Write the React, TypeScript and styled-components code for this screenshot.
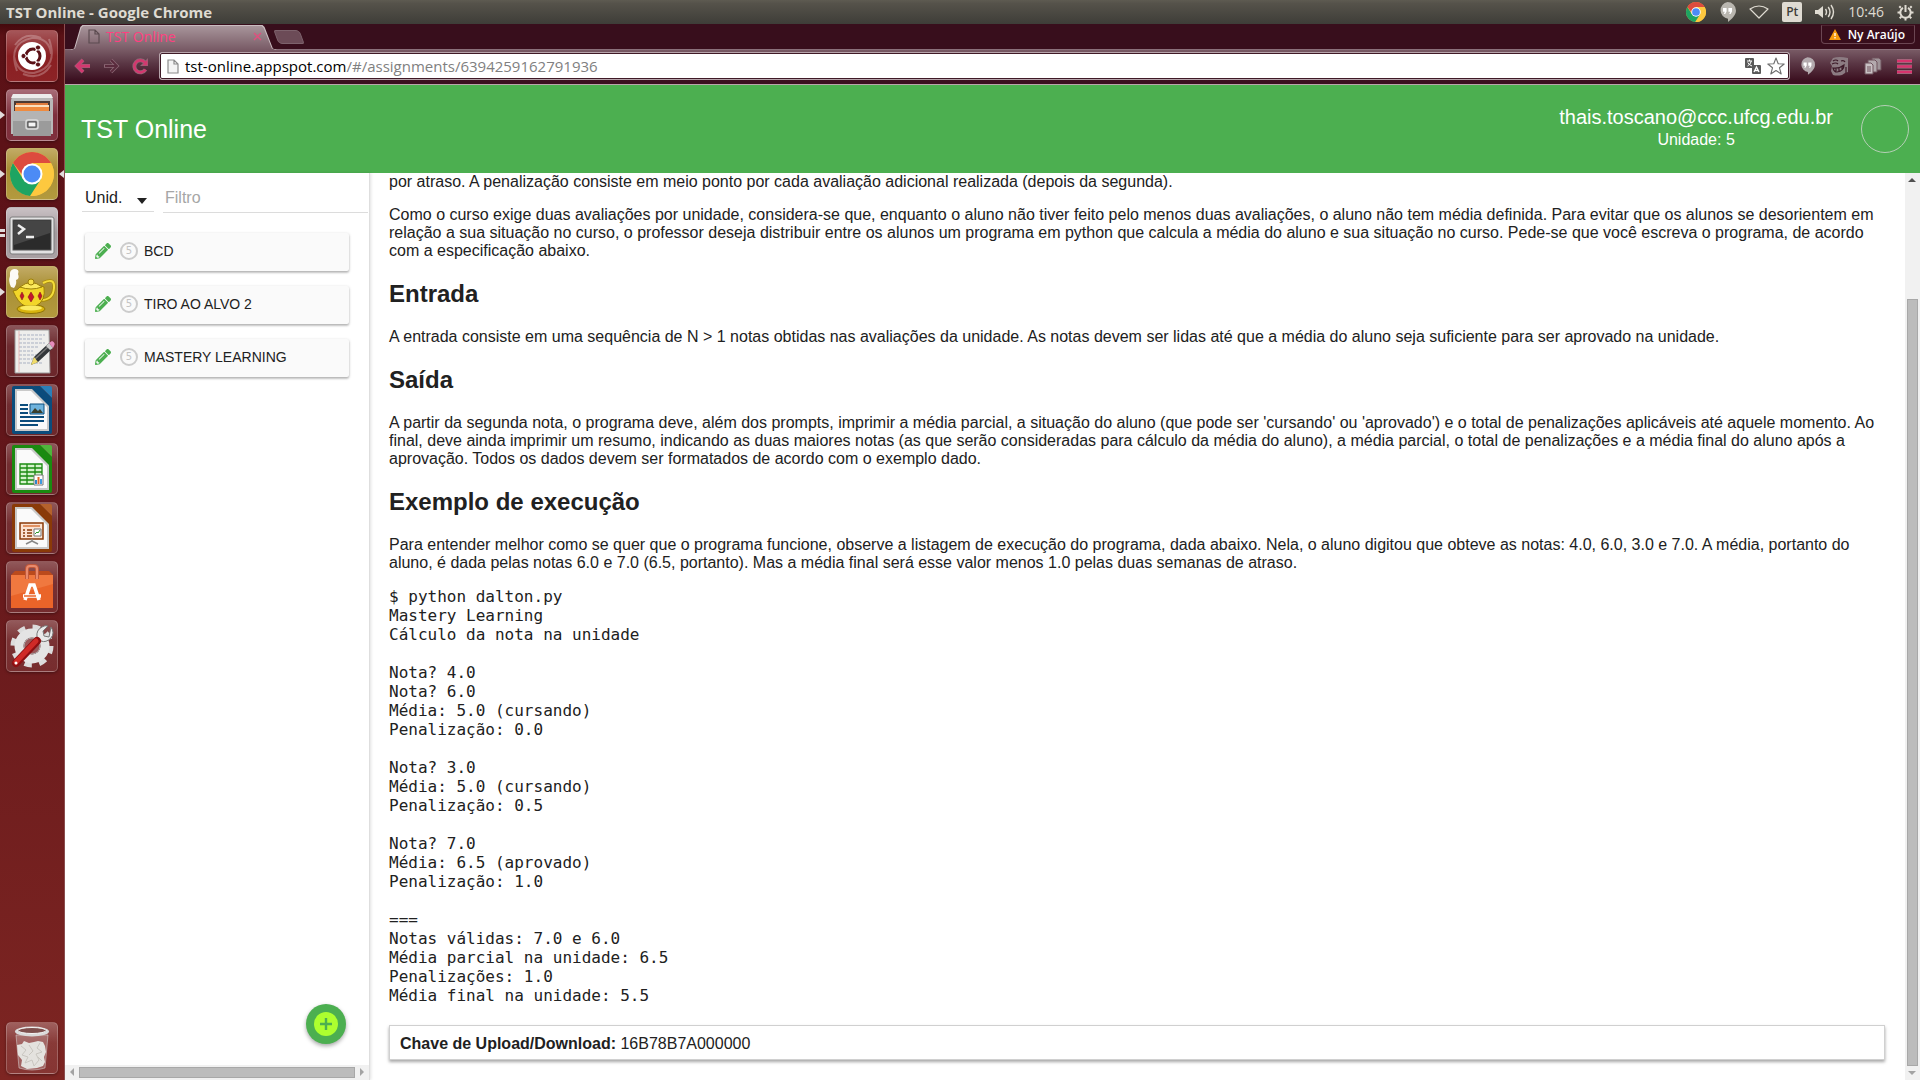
import React from "react";
import styled, { createGlobalStyle } from "styled-components";
import { FaPencilAlt } from "react-icons/fa";

const uiFont = `"Open Sans", "Noto Sans", sans-serif`;
const pageFont = `"Liberation Sans", Arial, sans-serif`;
const green = "#4caf50";

const GlobalStyle = createGlobalStyle`
  * { box-sizing: border-box; }
  body { margin: 0; background: #fff; overflow: hidden; }
  button, input, select { font: inherit; color: inherit; margin: 0; }
  svg { display: block; flex: none; }
`;

const Desktop = styled.div`
  display: grid;
  grid-template: 24px minmax(0, 1fr) / 65px minmax(0, 1fr);
  height: 100vh;
  font-family: ${uiFont};
`;

/* ---------- top panel ---------- */

const Panel = styled.header`
  grid-column: 1 / -1;
  display: flex;
  align-items: center;
  justify-content: space-between;
  padding: 0 6px;
  color: #dfdbd2;
  background: linear-gradient(#5e5b51, #55524a 15%, #3e3d38);
`;

const WindowTitle = styled.h1`
  margin: 0;
  font-size: 15px;
  line-height: 24px;
  font-weight: 700;
`;

const Indicators = styled.div`
  display: flex;
  align-items: center;
  gap: 13px;
`;

const Keyboard = styled.span`
  width: 20px;
  height: 20px;
  border-radius: 2px;
  background: #dfdbd2;
  color: #3e3d38;
  font-size: 12px;
  font-weight: 600;
  line-height: 20px;
  text-align: center;
`;

const Clock = styled.time`
  font-size: 14px;
  line-height: 24px;
`;

/* ---------- launcher ---------- */

const Launcher = styled.nav`
  display: flex;
  flex-direction: column;
  gap: 7px;
  padding: 6px;
  border-right: 1px solid #8d4f50;
  background: linear-gradient(#44090d, #5b1116 12px, #5e1419 30%, #7d2522);
`;

const Tile = styled.button<{ $tint: string }>`
  position: relative;
  display: grid;
  place-items: center;
  width: 52px;
  height: 52px;
  padding: 0;
  border: 1px solid rgba(255, 255, 255, 0.22);
  border-radius: 5px;
  background: ${(p) => p.$tint};
  box-shadow: 0 1px 3px rgba(0, 0, 0, 0.35);
  &:last-child { margin-top: auto; }
`;

const Marker = styled.i<{ $side: "left" | "right" }>`
  position: absolute;
  top: 21px;
  ${(p) => p.$side}: -7px;
  border: 4px solid transparent;
  border-${(p) => p.$side}: 5px solid #e2dcdc;
  border-${(p) => (p.$side === "left" ? "right" : "left")}-width: 0;
`;

const Pair = styled.i`
  position: absolute;
  top: 21px;
  left: -7px;
  width: 5px;
  height: 8px;
  border: solid #e2dcdc;
  border-width: 3px 0;
`;

/* ---------- browser ---------- */

const Browser = styled.div`
  display: flex;
  flex-direction: column;
  min-width: 0;
  min-height: 0;
`;

const TabStrip = styled.div`
  display: flex;
  justify-content: space-between;
  height: 25px;
  padding: 1px 5px 0;
  background: #380e1c;
`;

const Tabs = styled.div`
  display: flex;
`;

/* One pixel taller than the strip, so that it covers the toolbar's top line. */
const TabEdge = styled.div`
  position: relative;
  width: 207px;
  height: 25px;
  padding: 1px 1px 0;
  background: #c9bcc0;
  clip-path: polygon(0 100%, 2% 94%, 5% 8%, 6% 0, 93% 0, 94% 8%, 98% 94%, 100% 100%);
`;

const Tab = styled.div`
  display: flex;
  align-items: center;
  gap: 6px;
  height: 24px;
  padding: 0 14px 3px 17px;
  color: #ff4080;
  font-size: 14px;
  line-height: 20px;
  background: linear-gradient(#a8959b, #785a65);
  clip-path: polygon(0 100%, 2% 94%, 5% 8%, 6% 0, 93% 0, 94% 8%, 98% 94%, 100% 100%);
`;

const TabName = styled.span`
  flex: 1;
`;

const BareButton = styled.button`
  display: grid;
  place-items: center;
  padding: 0;
  border: 0;
  background: none;
`;

const NewTab = styled.button`
  align-self: center;
  width: 26px;
  height: 14px;
  margin-left: -1px;
  padding: 0;
  border: 1px solid #7d626c;
  border-radius: 2px 4px 2px 4px;
  background: #6c4b57;
  transform: skewX(20deg);
`;

const Profile = styled.button`
  display: flex;
  align-items: center;
  gap: 7px;
  height: 19px;
  padding: 0 9px 0 7px;
  border: 1px solid #6b4652;
  border-top-color: #4d2431;
  border-radius: 0 0 4px 4px;
  background: none;
  color: #fff;
  font-size: 12px;
  font-weight: 600;
  line-height: 16px;
`;

const Toolbar = styled.div`
  display: flex;
  align-items: center;
  height: 36px;
  padding: 0 8px 2px 9px;
  gap: 10px;
  border-top: 1px solid #8a707a;
  border-bottom: 1px solid #b9a5ab;
  background: linear-gradient(#785a65, #5a3644 40%, #3b0f1f 90%);
`;

const NavButtons = styled.div`
  display: flex;
  align-items: center;
  gap: 12px;
`;

const Omnibox = styled.form`
  display: flex;
  flex: 1;
  align-items: center;
  gap: 6px;
  height: 28px;
  padding: 0 4px 0 7px;
  border: 1px solid #b7a4ab;
  outline: 1px solid #3f1a27;
  outline-offset: -2px;
  border-radius: 3px;
  background: #fff;
`;

const Address = styled.label`
  flex: 1;
  color: #808080;
  font-size: 15px;
  line-height: 22px;
  b { color: #000; font-weight: 400; }
`;

const Extensions = styled.div`
  display: flex;
  align-items: center;
  gap: 15px;
`;

/* ---------- application ---------- */

const AppBar = styled.header`
  display: flex;
  flex: none;
  align-items: center;
  height: 88px;
  padding: 0 11px 0 16px;
  background: ${green};
  color: #fff;
  font-family: ${pageFont};
`;

const Brand = styled.h2`
  flex: 1;
  margin: 0;
  font-size: 25px;
  font-weight: 400;
  line-height: 28px;
`;

const Account = styled.div`
  display: flex;
  flex-direction: column;
  align-items: center;
  margin-right: 28px;
  padding-bottom: 4px;
  font-size: 16px;
  line-height: 20px;
`;

const Email = styled.span`
  font-size: 20px;
  line-height: 26px;
`;

const Avatar = styled.button`
  width: 48px;
  height: 48px;
  border: 1px solid #b5cfb6;
  border-radius: 50%;
  background: none;
`;

const Body = styled.div`
  display: grid;
  flex: 1;
  grid-template-columns: 305px minmax(0, 1fr) 15px;
  min-height: 0;
  color: #212121;
  font: 16px/18px ${pageFont};
`;

const Sidebar = styled.aside`
  display: flex;
  flex-direction: column;
  min-height: 0;
  border-right: 1px solid #dedede;
  box-shadow: 1px 0 3px rgba(0, 0, 0, 0.12);
`;

const Filters = styled.div`
  display: flex;
  align-items: flex-start;
  gap: 9px;
  padding: 10px 1px 0 17px;
`;

const UnitBox = styled.div`
  display: flex;
  align-items: center;
  width: 72px;
  height: 29px;
  padding: 1px 7px 0 3px;
  border-bottom: 1px solid #dcdcdc;
`;

const UnitSelect = styled.select`
  flex: 1;
  min-width: 0;
  padding: 0;
  border: 0;
  appearance: none;
  background: none;
`;

const Caret = styled.i`
  margin-top: 6px;
  border: 5px solid transparent;
  border-top: 6px solid #212121;
  border-bottom: 0;
`;

const FilterInput = styled.input`
  flex: 1;
  min-width: 0;
  height: 30px;
  padding: 0 2px;
  border: 0;
  border-bottom: 1px solid #dcdcdc;
  background: none;
  &::placeholder { color: #a6a6a6; opacity: 1; }
`;

const Assignments = styled.ul`
  display: flex;
  flex: 1;
  flex-direction: column;
  gap: 15px;
  margin: 0;
  padding: 20px 20px 0;
  list-style: none;
`;

const Card = styled.button`
  display: flex;
  align-items: center;
  gap: 5px;
  width: 100%;
  height: 38px;
  padding: 0 10px 2px;
  border: 0;
  border-radius: 2px;
  background: #fafafa;
  box-shadow: 0 1px 3px rgba(0, 0, 0, 0.25), 0 2px 2px rgba(0, 0, 0, 0.13);
  font-size: 14px;
  line-height: 18px;
  text-align: left;
`;

const Level = styled.span`
  display: grid;
  place-items: center;
  width: 18px;
  height: 18px;
  margin: 0 1px 0 4px;
  border: 2px solid #cccccc;
  border-radius: 50%;
  color: #c4c4c4;
  font: 10px/14px "DejaVu Sans", sans-serif;
`;

const AddButton = styled.button`
  display: grid;
  place-items: center;
  align-self: flex-end;
  width: 40px;
  height: 40px;
  margin: 0 23px 21px 0;
  padding: 0;
  border: 0;
  border-radius: 50%;
  background: ${green};
  box-shadow: 0 2px 4px rgba(0, 0, 0, 0.35);
`;

const Bar = styled.div<{ $vertical?: boolean }>`
  display: flex;
  flex: none;
  flex-direction: ${(p) => (p.$vertical ? "column" : "row")};
  align-items: stretch;
  ${(p) => (p.$vertical ? "width" : "height")}: 15px;
  background: #f1f1f1;
`;

const BarEnd = styled.button`
  display: grid;
  place-items: center;
  flex: none;
  width: 14px;
  height: 14px;
  padding: 0;
  border: 0;
  background: none;
`;

const Gap = styled.div<{ $share: number }>`
  flex: ${(p) => p.$share};
`;

const Thumb = styled.div<{ $share: number; $vertical?: boolean }>`
  flex: ${(p) => p.$share};
  margin: ${(p) => (p.$vertical ? "0 2px" : "2px 0")};
  border: 1px solid #a8a8a8;
  background: #bcbcbc;
`;

/* The statement rests at the end of its scroll range. */
const Statement = styled.main`
  display: flex;
  flex-direction: column;
  justify-content: flex-end;
  min-width: 0;
  min-height: 0;
  padding: 0 20px 20px 19px;
  overflow: hidden;
`;

const Article = styled.article`
  flex: none;
  p { margin: 0 0 15px; }
  h2 { margin: 20px 0 21px; font-size: 24px; line-height: 27px; }
`;

const Listing = styled.pre`
  margin: 0 0 20px;
  font: 16px/19px "DejaVu Sans Mono", monospace;
`;

const KeyBox = styled.div`
  padding: 9px 10px 6px;
  border: 1px solid #d0d0d0;
  box-shadow: 0 2px 3px rgba(0, 0, 0, 0.35);
`;

/* ---------- drawings ---------- */

const ChromeLogo = ({ size }: { size: number }) => (
  <svg width={size} height={size} viewBox="0 0 44 44">
    <circle cx="22" cy="22" r="22" fill="#fbc640" />
    <path d="M41 11A22 22 0 0 1 20 44L31 26 22 11Z" fill="#fdc83f" />
    <path d="M3 11A22 22 0 0 0 20 44L31 27 13 27Z" fill="#1da462" />
    <path d="M3 11A22 22 0 0 1 41 11H22L14 25Z" fill="#dd4b3e" />
    <circle cx="22" cy="22" r="10.500" fill="#fff" />
    <circle cx="22" cy="22" r="8.500" fill="#4c8bf5" />
  </svg>
);

const Quote = ({ size, fill, mark }: { size: number; fill: string; mark: string }) => (
  <svg width={size} height={size + 3} viewBox="0 0 17 20">
    <path d="M8.500 0a8.500 8.500 0 0 1 8.500 8.500C17 13 13 17 9 20v-3.200A8.500 8.500 0 0 1 8.500 0z" fill={fill} />
    <path d="M4 6h3.600v3.500L6.200 12H4.800l1-2.200H4zM9.400 6H13v3.500L11.600 12h-1.400l1-2.200H9.400z" fill={mark} />
  </svg>
);

const Wifi = () => (
  <svg width="20" height="14" viewBox="0 0 20 14">
    <path d="M1 4Q10-2 19 4L10 13Z" fill="none" stroke="#dfdbd2" strokeWidth="1.200" strokeLinejoin="round" />
  </svg>
);

const Volume = () => (
  <svg width="20" height="16" viewBox="0 0 20 16">
    <path d="M0 6h3l5-4v12l-5-4H0z" fill="#dfdbd2" />
    <path d="M10.500 5q2 3 0 6M13.200 3q3.600 5 0 10M16 1q5 7 0 14" fill="none" stroke="#dfdbd2" strokeWidth="1.400" />
  </svg>
);

const Power = () => (
  <svg width="17" height="17" viewBox="0 0 17 17" fill="none" stroke="#dfdbd2">
    <path d="M6 3.900a5.200 5.200 0 1 0 5 0" strokeWidth="2" />
    <path d="M8.500 1v7" strokeWidth="2" />
    <path d="M3.800 3.800 2.300 2.300M13.200 3.800l1.500-1.500M3 8.500H.5M14 8.500h2.500M4.300 12.700l-1.600 1.600M12.700 12.700l1.600 1.600M8.500 14v2.500" strokeWidth="2" />
  </svg>
);

const Sheet = ({ stroke, fill }: { stroke: string; fill: string }) => (
  <svg width="12" height="15" viewBox="0 0 12 15">
    <path d="M1 1h6l4 4v9H1zM7 1v4h4" fill={fill} stroke={stroke} strokeWidth="1.200" />
  </svg>
);

const Arrow = ({ back }: { back?: boolean }) => (
  <svg width="17" height="16" viewBox="0 0 17 16">
    <path
      d={back ? "M9 2 3 8l6 6M3 8h13" : "M8 2l6 6-6 6M14 8H1"}
      fill="none"
      stroke="#8d6876"
      strokeWidth={back ? 4 : 3.5}
    />
    <path
      d={back ? "M9 2 3 8l6 6M3 8h13" : "M8 2l6 6-6 6M13 8H2"}
      fill="none"
      stroke={back ? "#d3386f" : "#5a2b3d"}
      strokeWidth={back ? 3 : 2}
    />
  </svg>
);

const Reload = () => (
  <svg width="17" height="17" viewBox="0 0 17 17">
    <path d="M13.500 11.500a6 6 0 1 1-.5-7" fill="none" stroke="#8d6876" strokeWidth="4" />
    <path d="M16 0v8H8z" fill="#8d6876" />
    <path d="M13.500 11.500a6 6 0 1 1-.5-7" fill="none" stroke="#d3386f" strokeWidth="2.600" />
    <path d="M15.500 1.500v6H10z" fill="#d3386f" />
  </svg>
);

const Translate = () => (
  <svg width="16" height="16" viewBox="0 0 16 16">
    <rect width="9" height="10" rx="1" fill="#5a5a5a" />
    <path d="M2 3h5M4.500 1.500V3M2.500 8Q6 6 6.300 3M2.800 4.500Q4 7 7 8" fill="none" stroke="#fff" />
    <rect x="7" y="7" width="9" height="9" rx="1" fill="#5a5a5a" />
    <path d="m9 14 2.500-5L14 14M10 12.500h3" fill="none" stroke="#fff" strokeWidth="1.300" />
  </svg>
);

const Star = () => (
  <svg width="18" height="18" viewBox="0 0 18 18">
    <path d="m9 1 2.200 5.700 6 .3-4.700 3.800L14.200 17 9 13.500 3.800 17l1.700-6.200L.8 7l6-.3z" fill="#fff" stroke="#6e6e6e" strokeWidth="1.100" strokeLinejoin="round" />
  </svg>
);

const Troll = () => (
  <svg width="19" height="19" viewBox="0 0 19 19">
    <path d="M3 1Q9-1 18 1V15l-3 1-3 2q-5 1-9 0L1 14 2 9 0 6z" fill="#8c7b82" />
    <path d="M3 4q3-2 5 0M11 4q3-1 4 1M2 7q4-2 6 0M3 11q6 1 11-3 0 6-7 7-3 0-4-4zM6 11v3M9 11v3M12 10v3M16 10v6" fill="none" stroke="#3d1a28" strokeWidth="1.200" />
  </svg>
);

const Copies = () => (
  <svg width="18" height="18" viewBox="0 0 18 18" stroke="#6e525d">
    <path d="M8 1h7l2 2v10H8z" fill="#a09499" />
    <path d="M4 3h7l2 2v10H4z" fill="#b3a9ad" />
    <path d="M1 6h6l2 2v9H1z" fill="#c9c1c4" />
    <path d="M3 10h4M3 12h4M3 14h4" />
  </svg>
);

const Menu = () => (
  <svg width="15" height="15" viewBox="0 0 15 15">
    <path d="M0 2h15M0 7.500h15M0 13h15" stroke="#97727f" strokeWidth="4" />
    <path d="M0 2h15M0 7.500h15M0 13h15" stroke="#d8336d" strokeWidth="2.400" />
  </svg>
);

const Plus = () => (
  <svg width="24" height="24" viewBox="0 0 24 24">
    <circle cx="12" cy="12" r="12" fill="#adff2f" />
    <path d="M12 6v12M6 12h12" stroke={green} strokeWidth="2.400" />
  </svg>
);

const Point = ({ turn, fill }: { turn: number; fill: string }) => (
  <svg width="8" height="8" viewBox="0 0 8 8">
    <path d="M0 6h8L4 2z" fill={fill} transform={`rotate(${turn} 4 4)`} />
  </svg>
);

const UbuntuIcon = () => (
  <svg width="50" height="50" viewBox="0 0 50 50">
    <path d="M10 40Q0 12 25 7q17-1 19 16M42 8q10 28-15 34-17 1-20-17M8 14q10-14 26-7M44 34Q34 50 16 43" fill="none" stroke="#fff" strokeOpacity=".25" strokeWidth="2" />
    <circle cx="25" cy="25" r="14" fill="#fff" />
    <circle cx="26" cy="25" r="7" fill="none" stroke="#5b1116" strokeWidth="3" />
    <path d="M26 25h-9M26 25l4.500-8M26 25l4.500 8" stroke="#fff" strokeWidth="1.500" />
    <circle cx="16.500" cy="25" r="2.600" fill="#5b1116" stroke="#fff" />
    <circle cx="31" cy="16.500" r="2.600" fill="#5b1116" stroke="#fff" />
    <circle cx="31" cy="33.500" r="2.600" fill="#5b1116" stroke="#fff" />
    <circle cx="26" cy="25" r="5" fill="#fff" />
  </svg>
);

const FilesIcon = () => (
  <svg width="50" height="50" viewBox="0 0 50 50">
    <path d="M6 4h38l2 6v34H4V10z" fill="#b9b9b9" />
    <path d="M6 4h38l2 4H4z" fill="#ececec" />
    <path d="M7 11h36v12H7z" fill="#4b3a34" />
    <path d="M9 13h32v10H9z" fill="#e07b3c" />
    <path d="M8 15h34v8H8z" fill="#fbe0bf" />
    <path d="M8 17h34v4H8z" fill="#ef8b3f" />
    <path d="M6 21h38v25H6z" fill="#9b9b9b" />
    <path d="M6 21h38v10H6z" fill="#b4b4b4" />
    <rect x="19" y="30" width="12" height="9" rx="2" fill="#8d8d8d" stroke="#ddd" strokeWidth="1.500" />
    <path d="M21 32h8v5h-8z" fill="#f4f4f4" stroke="#444" />
  </svg>
);

const TerminalIcon = () => (
  <svg width="50" height="50" viewBox="0 0 50 50">
    <rect x="3" y="9" width="44" height="37" rx="2" fill="#e2e2e2" stroke="#7d7d7d" />
    <rect x="6" y="12" width="38" height="30" fill="#2b2b2b" stroke="#555" />
    <path d="M7 13h36v12L7 37z" fill="#454545" />
    <path d="m11 17 6 4-6 5" fill="none" stroke="#eee" strokeWidth="2.500" />
    <path d="M19 29h8" stroke="#eee" strokeWidth="2.500" />
  </svg>
);

const TeapotIcon = () => (
  <svg width="50" height="50" viewBox="0 0 50 50">
    <path d="M4 20Q1 14 3 9q-1-6 4-7 6 0 4 5 2 5-2 6 1 4-2 8z" fill="#fff" opacity=".95" />
    <path d="M36 16q12-6 11 5-1 12-13 12" fill="none" stroke="#a98a0b" strokeWidth="3.500" />
    <path d="M36 16q12-6 11 5-1 12-13 12" fill="none" stroke="#f4dc3a" strokeWidth="2" />
    <ellipse cx="24" cy="42" rx="14" ry="4.500" fill="#d8b40e" stroke="#8f7408" />
    <path d="M6 24q4 0 7-4 11-6 24 0 2 14-8 19H18Q11 36 6 24z" fill="#f2d629" stroke="#9b7e09" />
    <path d="M13 20q11-9 22 0-11 4-22 0z" fill="#fbe95e" stroke="#9b7e09" />
    <circle cx="24" cy="15" r="3" fill="#f7e04a" stroke="#9b7e09" />
    <path d="m15 25 2 4-2 4-2-4zM24 25l3 5-3 5-3-5zM33 25l2 4-2 4-2-4z" fill="#c4172c" stroke="#7a0f1b" strokeWidth=".5" />
    <ellipse cx="24" cy="41" rx="11" ry="2.500" fill="#faea62" />
  </svg>
);

const EditorIcon = () => (
  <svg width="50" height="50" viewBox="0 0 50 50">
    <path d="M8 4h34l1 43H8z" fill="#eeeeec" stroke="#999" />
    <path d="M12 9h26M12 13h24M12 17h26M12 21h20M12 25h14M12 29h22M12 33h18M12 37h24" stroke="#a9b1c2" strokeWidth="1" strokeDasharray="3 1" />
    <path d="M12 5v41" stroke="#e7a3a3" strokeWidth=".7" />
    <path d="m24 39 3-8 15-14 4 5-15 14z" fill="#33373a" />
    <path d="m28 33 14-13" stroke="#777" strokeWidth="1.500" />
    <path d="m24 39 3-8 4 5z" fill="#f0dc6a" />
    <path d="m39 20 3-3 4 5-3 2z" fill="#ccc" />
    <path d="m42 17 3-2q4 2 2 5l-1 2z" fill="#e58cbc" />
  </svg>
);

const OfficeIcon = ({ tone, accent, children }: { tone: string; accent: string; children: React.ReactNode }) => (
  <svg width="50" height="50" viewBox="0 0 50 50">
    <path d="M7 1h19l19 18v28q0 2-2 2H7q-2 0-2-2V3q0-2 2-2z" fill={tone} />
    <path d="M33 1h10q2 0 2 2v10z" fill={accent} />
    <path d="M8 4h17l17 17v25H8z" fill="#c9c9c9" />
    <path d="M10 6h14l16 16v22H10z" fill="#fafafa" />
    <path d="M26 1h7l12 12v8l-3-1z" fill={tone} />
    {children}
  </svg>
);

const StoreIcon = () => (
  <svg width="50" height="50" viewBox="0 0 50 50">
    <path d="m4 13 4-4h34l4 4z" fill="#bb4a1c" />
    <path d="M4 13h42v33H4z" fill="#ea6429" />
    <path d="M4 13h42v9L4 34z" fill="#f0783f" />
    <path d="M20 17V7q0-3 3-3h4q3 0 3 3v10" fill="none" stroke="#c2583a" strokeWidth="4" />
    <path d="M20 17V7q0-3 3-3h4q3 0 3 3v10" fill="none" stroke="#e98a6c" strokeWidth="2" />
    <path d="m18 38 5-15h4l5 15M16 34h18" fill="none" stroke="#fff" strokeWidth="3.500" />
    <path d="M17 34h12" stroke="#ea6429" strokeWidth="1.500" />
  </svg>
);

const SettingsIcon = () => (
  <svg width="50" height="50" viewBox="0 0 50 50">
    <circle cx="25" cy="25" r="18.500" fill="none" stroke="#dcdcdc" strokeWidth="6" strokeDasharray="7.200 7.330" />
    <circle cx="25" cy="25" r="13" fill="none" stroke="#e4e4e4" strokeWidth="9" />
    <circle cx="25" cy="25" r="8" fill="#99585a" stroke="#a9a9a9" />
    <path d="M44 6q4 6 0 11-5 5-10 3l-4-4q-1-7 5-10 3-2 6-1l-5 5 1 5 5 1z" fill="#e9e9e9" stroke="#777" />
    <path d="M30 20 9 42" stroke="#8d0f12" strokeWidth="8" strokeLinecap="round" />
    <path d="M29 20 9 41" stroke="#cf2a27" strokeWidth="5" strokeLinecap="round" />
    <circle cx="9" cy="42" r="1.500" fill="#fff" />
  </svg>
);

const TrashIcon = () => (
  <svg width="50" height="50" viewBox="0 0 50 50">
    <path d="M9 12h32l-3 33q-13 4-26 0z" fill="#fff" fillOpacity=".22" stroke="#ddd" strokeOpacity=".5" />
    <path d="m10 22 5-1 2-3 5 2 5-1 4-1 5 1 2 4 1 6-2 5 1 5-2 4-6 2-10 1-6-3 1-6-4-5z" fill="#e4e2de" />
    <path d="m14 23 5 4-4 5 6 2-3 6 7-3 2 6 5-6-3-6 6-2-5-4 3-5M22 22l4 6-4 4M31 34l4 4" fill="none" stroke="#c9c6c0" strokeWidth="1" />
    <ellipse cx="25" cy="8.500" rx="17" ry="5" fill="#dadada" />
    <ellipse cx="25" cy="7.500" rx="14" ry="3" fill="#7e4f4d" stroke="#f4f4f4" />
  </svg>
);

const glass = "linear-gradient(rgba(255,255,255,.28), rgba(255,255,255,.1) 40%, rgba(255,255,255,.08))";
const gold = "linear-gradient(#c2ab65, #a98f35 40%, #b39a3e)";

const launcherItems: { name: string; tint: string; icon: React.ReactNode; marks?: React.ReactNode }[] = [
  { name: "Painel", tint: "linear-gradient(#a55659, #8a1f22 50%, #8c2326)", icon: <UbuntuIcon /> },
  { name: "Arquivos", tint: "linear-gradient(#a86d78, #7e2f3d 50%, #7f303d)", icon: <FilesIcon />, marks: <Marker $side="left" /> },
  {
    name: "Google Chrome",
    tint: gold,
    icon: <ChromeLogo size={44} />,
    marks: (
      <>
        <Marker $side="left" />
        <Marker $side="right" />
      </>
    ),
  },
  { name: "Terminal", tint: "linear-gradient(#c9c1c4, #a39a9d 50%, #a9a1a3)", icon: <TerminalIcon />, marks: <Pair /> },
  { name: "Bule", tint: gold, icon: <TeapotIcon />, marks: <Marker $side="left" /> },
  { name: "Editor de texto", tint: glass, icon: <EditorIcon /> },
  {
    name: "Writer",
    tint: glass,
    icon: (
      <OfficeIcon tone="#0b4c7c" accent="#2a7fb8">
        <path d="M13 20h8M13 24h8M13 28h8M13 32h24M13 36h24M13 40h18" stroke="#0b4c7c" strokeWidth="2" />
        <path d="M23 19h14v10H23z" fill="#6fb3dd" stroke="#0b4c7c" />
        <path d="m24 28 4-5 3 3 2-2 3 4z" fill="#3a3f2c" />
      </OfficeIcon>
    ),
  },
  {
    name: "Calc",
    tint: glass,
    icon: (
      <OfficeIcon tone="#1a8a10" accent="#4fb53b">
        <path d="M13 20h22v20H13zM13 24h22M13 28h22M13 32h22M13 36h22M20 20v20M28 20v20" fill="#d5f2cc" stroke="#1a8a10" strokeWidth="1.300" />
        <path d="M27 31h9v10h-9z" fill="#fff" stroke="#777" />
        <path d="M28 36h2v4h-2z" fill="#2f86c9" />
        <path d="M30.500 33h2v7h-2z" fill="#e0672a" />
        <path d="M33 35h2v5h-2z" fill="#3d9ae0" />
      </OfficeIcon>
    ),
  },
  {
    name: "Impress",
    tint: glass,
    icon: (
      <OfficeIcon tone="#8a3a08" accent="#b5622c">
        <path d="M13 20h23v16H13z" fill="#fbe3d3" stroke="#8a3a08" strokeWidth="1.500" />
        <path d="M16 23h17" stroke="#d9783f" strokeWidth="1.500" />
        <path d="M16 27h2M16 30h2M16 33h2M20 27h5M20 30h5M20 33h5" stroke="#8a3a08" strokeWidth="1.500" />
        <path d="M27 26h7v7h-7z" fill="#fff" stroke="#777" />
        <path d="m28 31 2-2 1 1 2-3" fill="none" stroke="#2f9a2a" />
        <path d="M25 36v2l-6 3M25 38l6 3" fill="none" stroke="#888" strokeWidth="1.500" />
      </OfficeIcon>
    ),
  },
  { name: "Central de programas", tint: glass, icon: <StoreIcon /> },
  { name: "Configurações", tint: glass, icon: <SettingsIcon /> },
  { name: "Lixeira", tint: glass, icon: <TrashIcon /> },
];

const assignments = ["BCD", "TIRO AO ALVO 2", "MASTERY LEARNING"];

const listing = `$ python dalton.py
Mastery Learning
Cálculo da nota na unidade

Nota? 4.0
Nota? 6.0
Média: 5.0 (cursando)
Penalização: 0.0

Nota? 3.0
Média: 5.0 (cursando)
Penalização: 0.5

Nota? 7.0
Média: 6.5 (aprovado)
Penalização: 1.0

===
Notas válidas: 7.0 e 6.0
Média parcial na unidade: 6.5
Penalizações: 1.0
Média final na unidade: 5.5`;

export default function App() {
  return (
    <Desktop>
      <GlobalStyle />
      <Panel>
        <WindowTitle>TST Online - Google Chrome</WindowTitle>
        <Indicators>
          <ChromeLogo size={20} />
          <Quote size={17} fill="#b9b6af" mark="#fff" />
          <Wifi />
          <Keyboard>Pt</Keyboard>
          <Volume />
          <Clock>10:46</Clock>
          <Power />
        </Indicators>
      </Panel>

      <Launcher>
        {launcherItems.map((item) => (
          <Tile key={item.name} $tint={item.tint} aria-label={item.name}>
            {item.icon}
            {item.marks}
          </Tile>
        ))}
      </Launcher>

      <Browser>
        <TabStrip>
          <Tabs>
            <TabEdge>
              <Tab>
                <Sheet stroke="#5c4b50" fill="none" />
                <TabName>TST Online</TabName>
                <BareButton aria-label="Fechar guia">
                  <svg width="9" height="9" viewBox="0 0 9 9">
                    <path d="m1 1 7 7M8 1 1 8" stroke="#e0507e" strokeWidth="1.500" />
                  </svg>
                </BareButton>
              </Tab>
            </TabEdge>
            <NewTab aria-label="Nova guia" />
          </Tabs>
          <Profile>
            <svg width="12" height="12" viewBox="0 0 12 12">
              <path d="m6 0 6 11H0z" fill="#f79a0d" />
              <path d="M6 4v3M6 8v1.500" stroke="#fff" strokeWidth="1.300" />
            </svg>
            Ny Araújo
          </Profile>
        </TabStrip>
        <Toolbar>
          <NavButtons>
            <BareButton aria-label="Voltar"><Arrow back /></BareButton>
            <BareButton aria-label="Avançar"><Arrow /></BareButton>
            <BareButton aria-label="Recarregar"><Reload /></BareButton>
          </NavButtons>
          <Omnibox>
            <Sheet stroke="#8c8c8c" fill="#f4f4f4" />
            <Address>
              <b>tst-online.appspot.com</b>/#/assignments/6394259162791936
            </Address>
            <BareButton type="button" aria-label="Traduzir"><Translate /></BareButton>
            <BareButton type="button" aria-label="Favoritar"><Star /></BareButton>
          </Omnibox>
          <Extensions>
            <BareButton aria-label="Hangouts"><Quote size={15} fill="#b3aaae" mark="#fff" /></BareButton>
            <BareButton aria-label="Troll"><Troll /></BareButton>
            <BareButton aria-label="Cópias"><Copies /></BareButton>
            <BareButton aria-label="Menu"><Menu /></BareButton>
          </Extensions>
        </Toolbar>

        <AppBar>
          <Brand>TST Online</Brand>
          <Account>
            <Email>thais.toscano@ccc.ufcg.edu.br</Email>
            <span>Unidade: 5</span>
          </Account>
          <Avatar aria-label="Conta" />
        </AppBar>

        <Body>
          <Sidebar>
            <Filters>
              <UnitBox>
                <UnitSelect aria-label="Unidade">
                  <option>Unid.</option>
                </UnitSelect>
                <Caret />
              </UnitBox>
              <FilterInput aria-label="Filtro" placeholder="Filtro" />
            </Filters>
            <Assignments>
              {assignments.map((title) => (
                <li key={title}>
                  <Card>
                    <FaPencilAlt size={16} color={green} />
                    <Level>5</Level>
                    {title}
                  </Card>
                </li>
              ))}
            </Assignments>
            <AddButton aria-label="Adicionar"><Plus /></AddButton>
            <Bar>
              <BarEnd aria-label="Esquerda"><Point turn={-90} fill="#a3a3a3" /></BarEnd>
              <Thumb $share={1} />
              <BarEnd aria-label="Direita"><Point turn={90} fill="#a3a3a3" /></BarEnd>
            </Bar>
          </Sidebar>

          <Statement>
            <Article>
              <p>por atraso. A penalização consiste em meio ponto por cada avaliação adicional realizada (depois da segunda).</p>
              <p>
                Como o curso exige duas avaliações por unidade, considera-se que, enquanto o aluno não tiver feito pelo menos duas
                avaliações, o aluno não tem média definida. Para evitar que os alunos se desorientem em relação a sua situação no
                curso, o professor deseja distribuir entre os alunos um programa em python que calcula a média do aluno e sua
                situação no curso. Pede-se que você escreva o programa, de acordo com a especificação abaixo.
              </p>
              <h2>Entrada</h2>
              <p>
                A entrada consiste em uma sequência de N &gt; 1 notas obtidas nas avaliações da unidade. As notas devem ser lidas
                até que a média do aluno seja suficiente para ser aprovado na unidade.
              </p>
              <h2>Saída</h2>
              <p>
                A partir da segunda nota, o programa deve, além dos prompts, imprimir a média parcial, a situação do aluno (que
                pode ser 'cursando' ou 'aprovado') e o total de penalizações aplicáveis até aquele momento. Ao final, deve ainda
                imprimir um resumo, indicando as duas maiores notas (as que serão consideradas para cálculo da média do aluno), a
                média parcial, o total de penalizações e a média final do aluno após a aprovação. Todos os dados devem ser
                formatados de acordo com o exemplo dado.
              </p>
              <h2>Exemplo de execução</h2>
              <p>
                Para entender melhor como se quer que o programa funcione, observe a listagem de execução do programa, dada
                abaixo. Nela, o aluno digitou que obteve as notas: 4.0, 6.0, 3.0 e 7.0. A média, portanto do aluno, é dada pelas
                notas 6.0 e 7.0 (6.5, portanto). Mas a média final será esse valor menos 1.0 pelas duas semanas de atraso.
              </p>
              <Listing>{listing}</Listing>
              <KeyBox>
                <strong>Chave de Upload/Download:</strong> 16B78B7A000000
              </KeyBox>
            </Article>
          </Statement>

          <Bar $vertical>
            <BarEnd aria-label="Acima"><Point turn={0} fill="#505050" /></BarEnd>
            <Gap $share={112} />
            <Thumb $share={767} $vertical />
            <BarEnd aria-label="Abaixo"><Point turn={180} fill="#a3a3a3" /></BarEnd>
          </Bar>
        </Body>
      </Browser>
    </Desktop>
  );
}
